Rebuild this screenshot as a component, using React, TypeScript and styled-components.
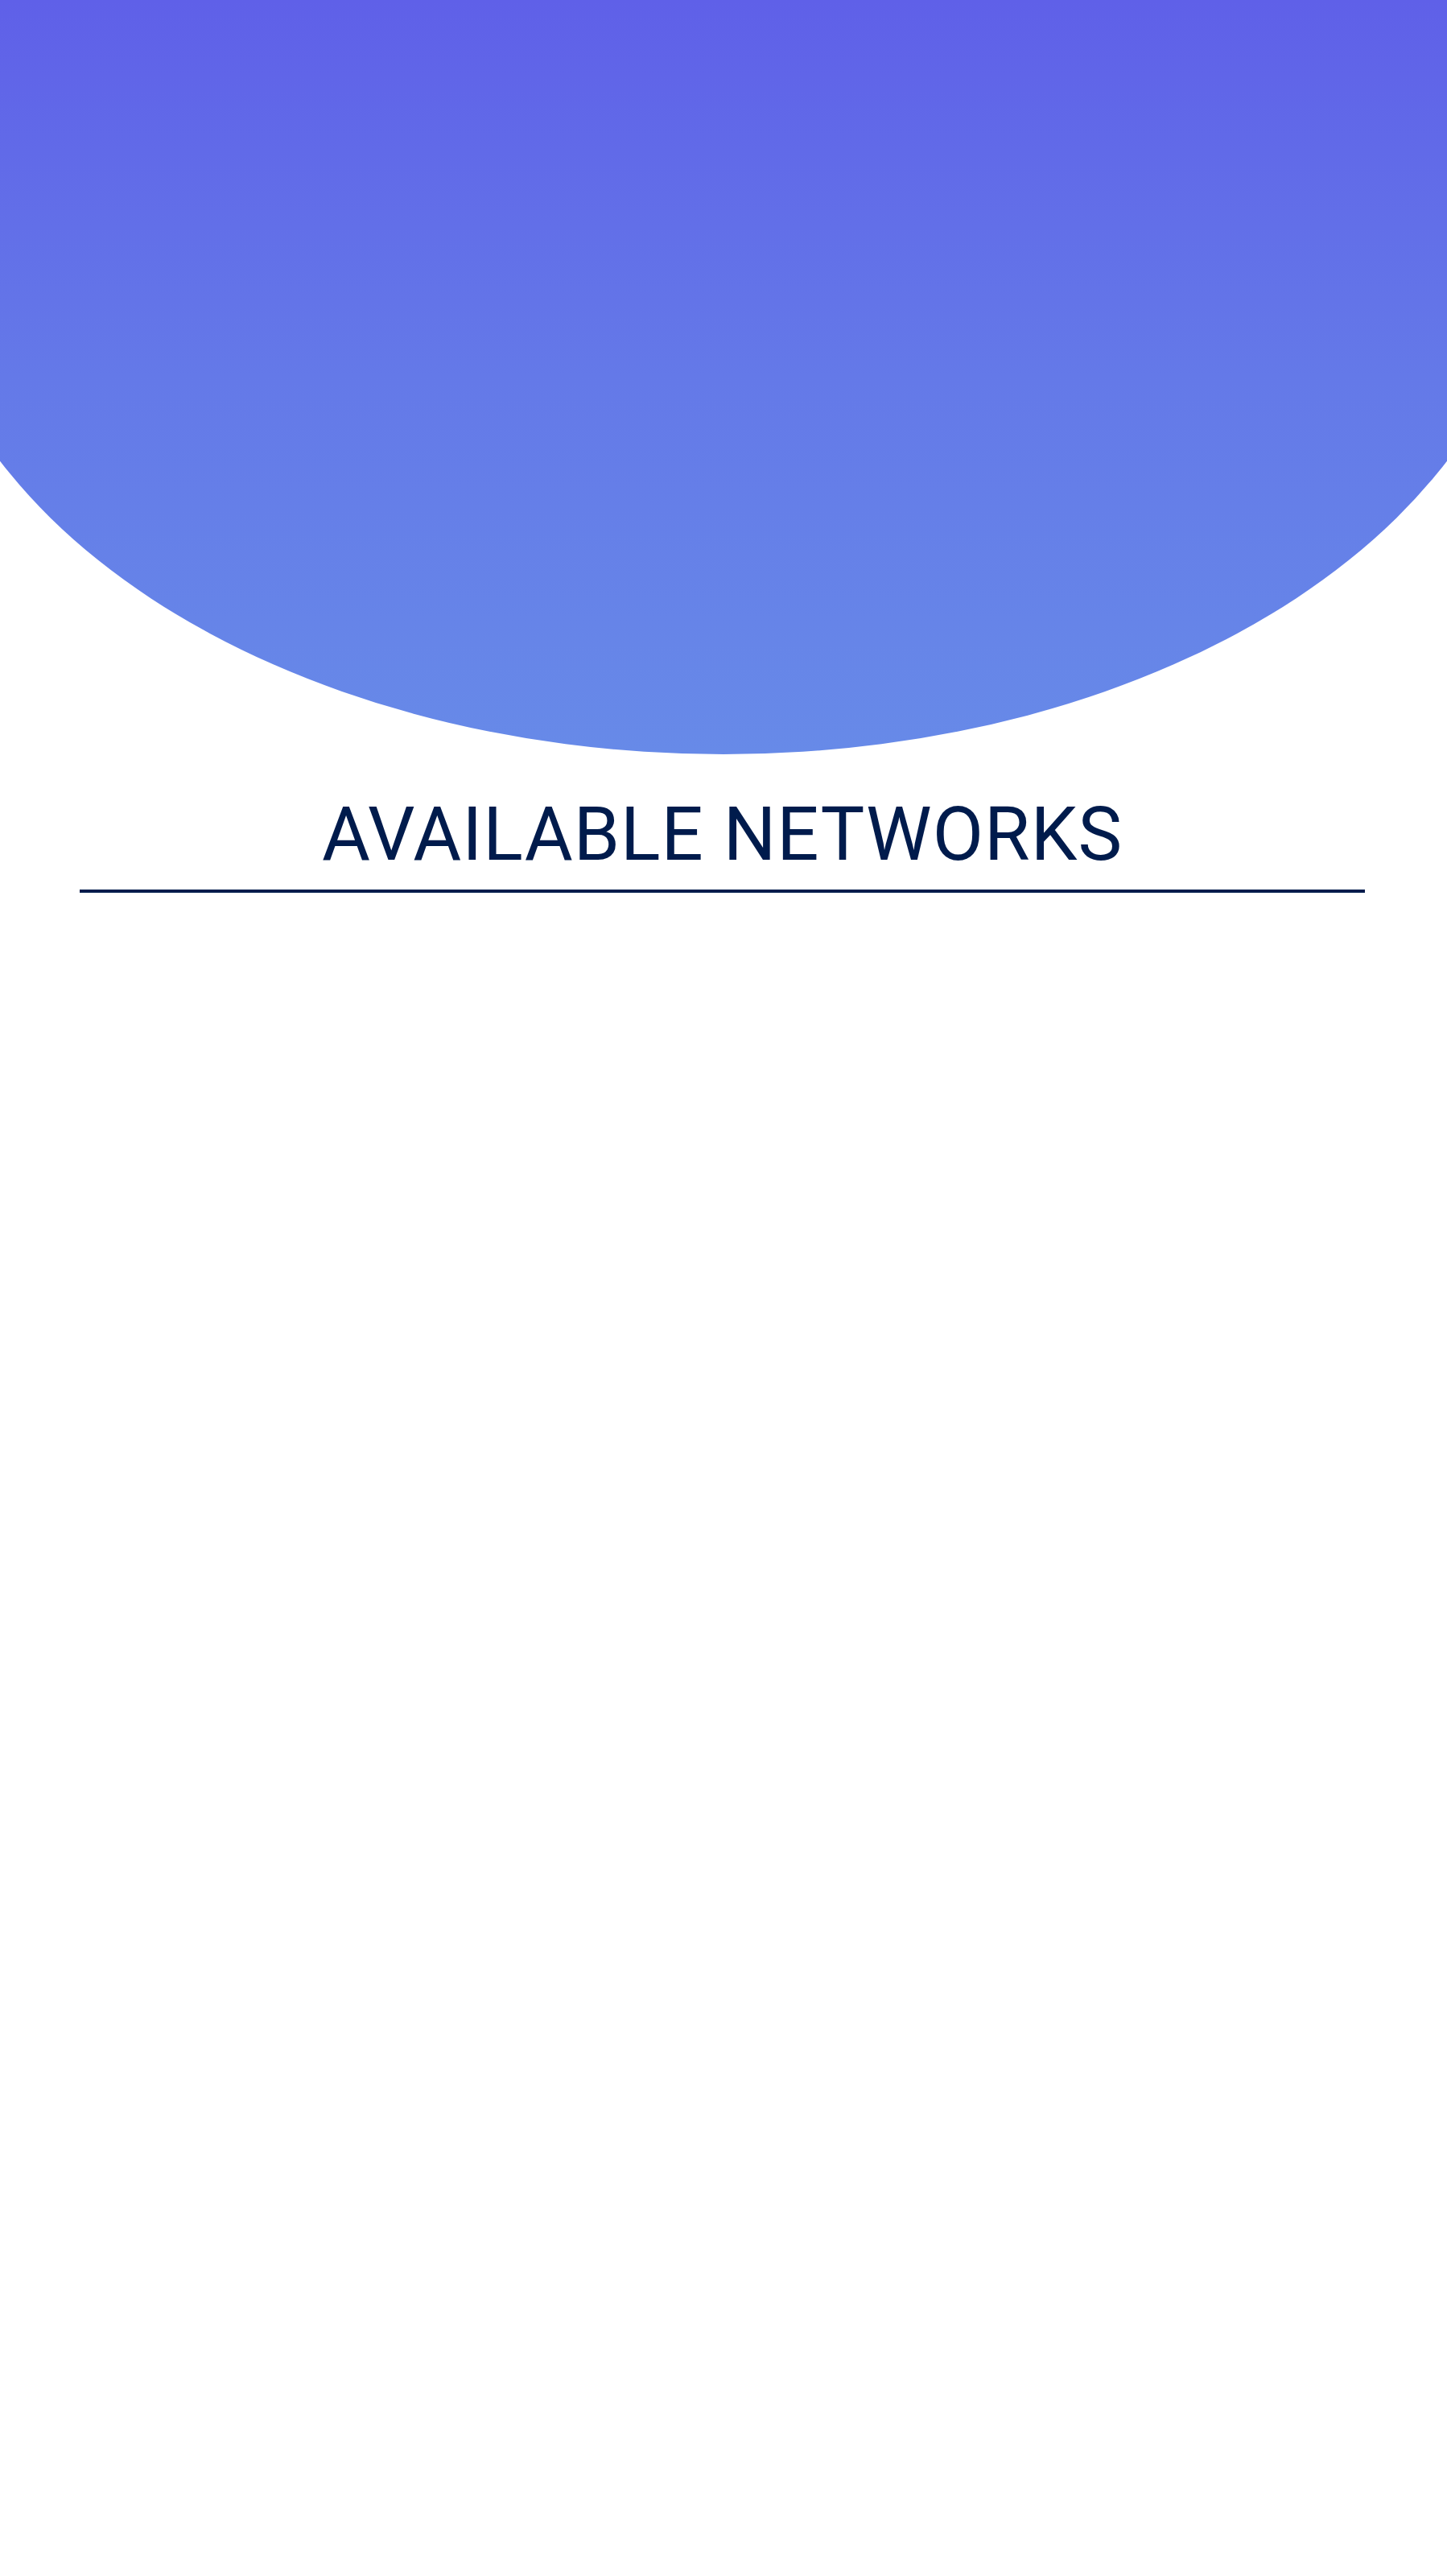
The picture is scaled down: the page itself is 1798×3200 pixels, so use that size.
import styled, { createGlobalStyle } from "styled-components";

const GlobalStyle = createGlobalStyle`
  html, body {
    margin: 0;
    padding: 0;
    background: #ffffff;
  }
  body {
    font-family: Roboto, "Liberation Sans", sans-serif;
  }
`;

const Page = styled.main`
  display: flex;
  flex-direction: column;
  width: 100%;
  overflow-x: hidden;
`;

const Hero = styled.header`
  display: flex;
  justify-content: center;
  height: 937px;
  overflow: hidden;
`;

const HeroShape = styled.div`
  flex: 0 0 2012px;
  height: 937px;
  background: linear-gradient(180deg, #5f60e8 0%, #6479e8 50%, #678ae8 100%);
  border-bottom-left-radius: 1006px 661px;
  border-bottom-right-radius: 1006px 661px;
`;

const Section = styled.section`
  display: flex;
  flex-direction: column;
  align-items: center;
  padding: 0 102px 0 99px;
`;

const Title = styled.h2`
  margin: 46px 0 0;
  font-family: Roboto, "Liberation Sans", sans-serif;
  font-weight: 400;
  font-size: 92px;
  line-height: 108px;
  color: #001b4c;
  letter-spacing: 1px;
  text-transform: uppercase;
`;

const Divider = styled.hr`
  align-self: stretch;
  margin: 14px 0 0;
  border: none;
  height: 4px;
  background: #001b4c;
`;

export default function App() {
  return (
    <Page>
      <GlobalStyle />
      <Hero>
        <HeroShape />
      </Hero>
      <Section>
        <Title>Available Networks</Title>
        <Divider />
      </Section>
    </Page>
  );
}
